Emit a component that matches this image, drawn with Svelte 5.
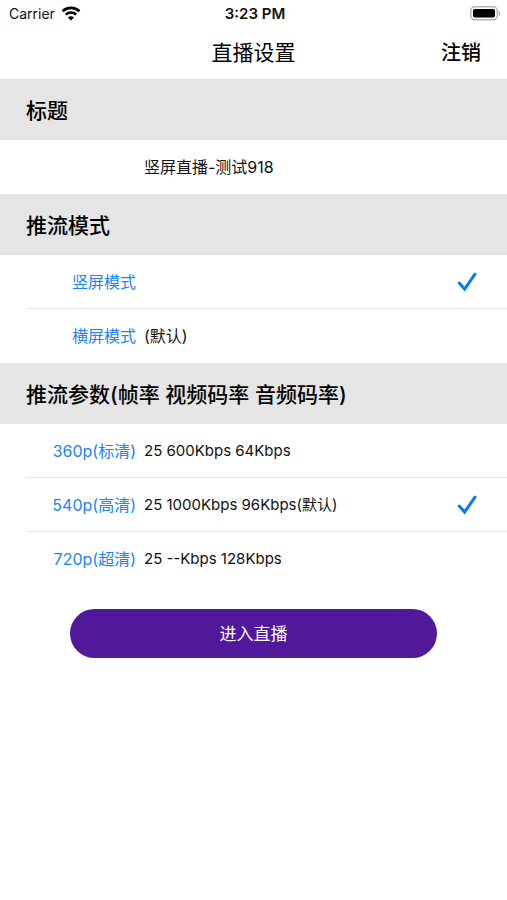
<script>
  let title = $state('竖屏直播-测试918');
  let mode = $state('portrait');
  let quality = $state('540');

  const modes = [
    { id: 'portrait', name: '竖屏模式', detail: '' },
    { id: 'landscape', name: '横屏模式', detail: '(默认)' }
  ];
  const qualities = [
    { id: '360', name: '360p(标清)', detail: '25 600Kbps 64Kbps' },
    { id: '540', name: '540p(高清)', detail: '25 1000Kbps 96Kbps(默认)' },
    { id: '720', name: '720p(超清)', detail: '25 --Kbps 128Kbps' }
  ];
</script>

{#snippet tick()}
  <svg class="tick" viewBox="0 0 20 20" width="20" height="20" aria-hidden="true">
    <path d="M2.2 11 L7.6 17 L18 2.2" fill="none" stroke="#0a78f5" stroke-width="3" stroke-linecap="round" stroke-linejoin="miter" />
  </svg>
{/snippet}

<div class="screen">
  <div class="status">
    <span class="carrier">
      Carrier
      <svg viewBox="0 0 20 15" width="20" height="15" aria-hidden="true">
        <g fill="none" stroke="#000" stroke-width="2.7">
          <path d="M1.6 5.3 C6.2 0.8 13.8 0.8 18.4 5.3" />
          <path d="M4.8 8.6 C7.7 5.8 12.3 5.8 15.2 8.6" />
        </g>
        <path d="M10 14.6 L6.9 11.4 C8.6 9.8 11.4 9.8 13.1 11.4 Z" />
      </svg>
    </span>
    <span class="time">3:23 PM</span>
    <svg class="battery" viewBox="0 0 31 15" width="31" height="15" aria-hidden="true">
      <rect x="0.8" y="0.8" width="26.4" height="13" rx="4" fill="#fff" stroke="#b5b5b5" stroke-width="1.5" />
      <rect x="3" y="3" width="22" height="8.6" rx="1.8" />
      <path d="M28.6 5 C30.8 5.8 30.8 9 28.6 9.8 Z" fill="#a8a8a8" />
    </svg>
  </div>

  <header>
    <h1>直播设置</h1>
    <button class="logout" type="button">注销</button>
  </header>

  <main>
    <h2><label for="title">标题</label></h2>
    <div class="row">
      <input id="title" class="title" type="text" bind:value={title} />
    </div>

    <h2 id="mode-heading">推流模式</h2>
    <div class="list" role="radiogroup" aria-labelledby="mode-heading">
      {#each modes as item (item.id)}
        <label class="row">
          <span class="name">{item.name}</span>
          <span class="detail large">{item.detail}</span>
          <span class="choice">
            <input type="radio" name="mode" value={item.id} bind:group={mode} />
            {@render tick()}
          </span>
        </label>
      {/each}
    </div>

    <h2 id="quality-heading">推流参数(帧率 视频码率 音频码率)</h2>
    <div class="list" role="radiogroup" aria-labelledby="quality-heading">
      {#each qualities as item (item.id)}
        <label class="row">
          <span class="name">{item.name}</span>
          <span class="detail">{item.detail}</span>
          <span class="choice">
            <input type="radio" name="quality" value={item.id} bind:group={quality} />
            {@render tick()}
          </span>
        </label>
      {/each}
    </div>

    <div class="action">
      <button class="enter" type="button">进入直播</button>
    </div>
  </main>
</div>

<style>
  :global(body) {
    margin: 0;
    background: #fff;
  }

  .screen {
    color: #111;
    font-family: Inter, 'Noto Sans CJK SC', sans-serif;
    font-size: 16px;
    line-height: 24px;
  }

  .screen * {
    box-sizing: border-box;
  }

  button,
  input {
    margin: 0;
    padding: 0;
    border: 0;
    background: none;
    color: inherit;
    font: inherit;
  }

  button {
    cursor: pointer;
  }

  .status,
  header {
    display: grid;
    grid-template-columns: 1fr auto 1fr;
    align-items: center;
  }

  .status {
    height: 27px;
    padding: 0 6px 0 9px;
    font-size: 14px;
  }

  .carrier {
    display: flex;
    align-items: center;
    gap: 6px;
  }

  .time {
    font-size: 15px;
    font-weight: 600;
  }

  .battery {
    justify-self: end;
  }

  header {
    height: 52px;
    padding: 0 26px;
    color: #000;
    font-size: 20px;
  }

  h1 {
    grid-column: 2;
    margin: 0;
    font-size: 21px;
    font-weight: 400;
  }

  .logout {
    justify-self: end;
    font-weight: 500;
  }

  h2 {
    display: flex;
    align-items: center;
    min-height: 61px;
    margin: 0;
    padding: 2px 26px 0;
    background: #e5e5e5;
    color: #000;
    font-size: 21px;
    font-weight: 500;
  }

  .row {
    display: grid;
    grid-template-columns: 110px 1fr auto;
    align-items: center;
    column-gap: 8px;
    min-height: 54px;
    margin-left: 26px;
    padding: 1px 30px 0 0;
    border-bottom: 1px solid #e6e6e6;
  }

  .row:last-child,
  div.row {
    border-bottom-color: transparent;
  }

  .title {
    grid-column: 2;
    width: 100%;
    outline: 0;
  }

  .name {
    color: #1a84f5;
    text-align: right;
    white-space: nowrap;
  }

  .detail {
    font-size: 15px;
  }

  .large {
    font-size: 16px;
  }

  .choice {
    display: grid;
  }

  .choice input,
  .choice :global(.tick) {
    grid-area: 1 / 1;
  }

  .choice input {
    width: 20px;
    height: 20px;
    appearance: none;
  }

  .tick {
    visibility: hidden;
    pointer-events: none;
  }

  .choice input:checked + :global(.tick) {
    visibility: visible;
  }

  .action {
    padding: 23px 70px;
  }

  .enter {
    width: 100%;
    height: 49px;
    border-radius: 25px;
    background: #52189b;
    color: #fff;
    font-size: 17px;
  }
</style>
